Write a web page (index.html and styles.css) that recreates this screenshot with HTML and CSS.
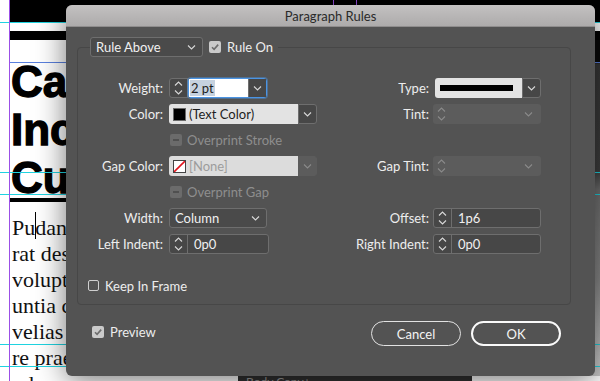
FILE: index.html
```html
<!DOCTYPE html>
<html lang="en">

<head>
    <meta charset="UTF-8">
    <meta name="viewport" content="width=device-width, initial-scale=1.0">
    <title>Paragraph Rules</title>
    <link rel="stylesheet" href="styles.css">
</head>

<body>
    <!-- Document page behind the dialog -->
    <div class="canvas">
        <div class="band band-top"></div>
        <div class="band band-bar"></div>
        <div class="photo"></div>
        <div class="headline">Capture<br>Incredible<br>Customers</div>
        <div class="head-rule"></div>
        <div class="copy">
            Pudandam quis<br>
            rat destiam et<br>
            voluptatem<br>
            untia cusam<br>
            velias ut qui<br>
            re praeriatur<br>
            od eum fugit
        </div>
        <div class="cursor"></div>

        <div class="guide guide-h" style="top: 22px;"></div>
        <div class="guide guide-h" style="top: 172px;"></div>
        <div class="guide guide-h" style="top: 194px;"></div>
        <div class="guide guide-h" style="top: 344px;"></div>
        <div class="guide guide-h" style="top: 366px;"></div>
        <div class="guide guide-frame"></div>
        <div class="guide guide-v" style="left: 9px;"></div>
        <div class="guide guide-v" style="left: 333px;"></div>
        <div class="guide guide-v" style="left: 356px;"></div>

        <div class="style-chip">Body Copy+</div>
    </div>

    <!-- Paragraph Rules dialog -->
    <div class="dialog">
        <div class="titlebar">Paragraph Rules</div>

        <div class="dialog-body">
            <fieldset class="group">
                <legend class="group-head">
                    <div class="select select-dark select-rule">
                        <span>Rule Above</span>
                        <svg class="chev" width="9" height="5" viewBox="0 0 9 5"><path d="M1 0.5 L4.5 4 L8 0.5" /></svg>
                    </div>
                    <span class="check check-on">
                        <svg width="12" height="12" viewBox="0 0 12 12"><path d="M3 6.2 L5.1 8.3 L9.2 3.6" /></svg>
                    </span>
                    <span class="check-label">Rule On</span>
                </legend>

                <div class="rules">
                    <!-- row 1 -->
                    <div class="label">Weight:</div>
                    <div class="ctl">
                        <div class="spinner spinner-split">
                            <div class="arrows">
                                <svg width="17" height="18" viewBox="0 0 17 18"><path d="M5 6.5 L8.5 3 L12 6.5 M5 11.5 L8.5 15 L12 11.5" /></svg>
                            </div>
                        </div>
                        <div class="combo focus">
                            <div class="combo-field"><span class="selected">2 pt</span></div>
                            <div class="combo-btn">
                                <svg class="chev" width="9" height="5" viewBox="0 0 9 5"><path d="M1 0.5 L4.5 4 L8 0.5" /></svg>
                            </div>
                        </div>
                    </div>
                    <div class="label label-right">Type:</div>
                    <div class="ctl">
                        <div class="combo combo-type">
                            <div class="combo-field light"><span class="line-swatch"></span></div>
                            <div class="combo-btn">
                                <svg class="chev" width="9" height="5" viewBox="0 0 9 5"><path d="M1 0.5 L4.5 4 L8 0.5" /></svg>
                            </div>
                        </div>
                    </div>

                    <!-- row 2 -->
                    <div class="label">Color:</div>
                    <div class="ctl">
                        <div class="combo combo-color">
                            <div class="combo-field light"><span class="swatch swatch-black"></span>(Text Color)</div>
                            <div class="combo-btn">
                                <svg class="chev" width="9" height="5" viewBox="0 0 9 5"><path d="M1 0.5 L4.5 4 L8 0.5" /></svg>
                            </div>
                        </div>
                    </div>
                    <div class="label label-right">Tint:</div>
                    <div class="ctl">
                        <div class="disabled-spin">
                            <svg class="arrows-off" width="17" height="18" viewBox="0 0 17 18"><path d="M5 6.5 L8.5 3 L12 6.5 M5 11.5 L8.5 15 L12 11.5" /></svg>
                            <svg class="chev chev-off" width="9" height="5" viewBox="0 0 9 5"><path d="M1 0.5 L4.5 4 L8 0.5" /></svg>
                        </div>
                    </div>

                    <!-- row 3 -->
                    <div class="label"></div>
                    <div class="ctl ctl-wide">
                        <span class="check check-off"><span class="dash"></span></span>
                        <span class="check-label muted">Overprint Stroke</span>
                    </div>

                    <!-- row 4 -->
                    <div class="label">Gap Color:</div>
                    <div class="ctl">
                        <div class="combo combo-color combo-off">
                            <div class="combo-field light-off">
                                <span class="swatch swatch-none">
                                    <svg width="11" height="11" viewBox="0 0 11 11"><path d="M0 11 L11 0" /></svg>
                                </span>[None]
                            </div>
                            <div class="combo-btn">
                                <svg class="chev chev-off" width="9" height="5" viewBox="0 0 9 5"><path d="M1 0.5 L4.5 4 L8 0.5" /></svg>
                            </div>
                        </div>
                    </div>
                    <div class="label label-right">Gap Tint:</div>
                    <div class="ctl">
                        <div class="disabled-spin">
                            <svg class="arrows-off" width="17" height="18" viewBox="0 0 17 18"><path d="M5 6.5 L8.5 3 L12 6.5 M5 11.5 L8.5 15 L12 11.5" /></svg>
                            <svg class="chev chev-off" width="9" height="5" viewBox="0 0 9 5"><path d="M1 0.5 L4.5 4 L8 0.5" /></svg>
                        </div>
                    </div>

                    <!-- row 5 -->
                    <div class="label"></div>
                    <div class="ctl ctl-wide">
                        <span class="check check-off"><span class="dash"></span></span>
                        <span class="check-label muted">Overprint Gap</span>
                    </div>

                    <!-- row 6 -->
                    <div class="label">Width:</div>
                    <div class="ctl">
                        <div class="select select-dark select-width">
                            <span>Column</span>
                            <svg class="chev" width="9" height="5" viewBox="0 0 9 5"><path d="M1 0.5 L4.5 4 L8 0.5" /></svg>
                        </div>
                    </div>
                    <div class="label label-right">Offset:</div>
                    <div class="ctl">
                        <div class="spinner spinner-right">
                            <div class="arrows">
                                <svg width="17" height="18" viewBox="0 0 17 18"><path d="M5 6.5 L8.5 3 L12 6.5 M5 11.5 L8.5 15 L12 11.5" /></svg>
                            </div>
                            <div class="spin-value">1p6</div>
                        </div>
                    </div>

                    <!-- row 7 -->
                    <div class="label">Left Indent:</div>
                    <div class="ctl">
                        <div class="spinner spinner-left">
                            <div class="arrows">
                                <svg width="17" height="18" viewBox="0 0 17 18"><path d="M5 6.5 L8.5 3 L12 6.5 M5 11.5 L8.5 15 L12 11.5" /></svg>
                            </div>
                            <div class="spin-value">0p0</div>
                        </div>
                    </div>
                    <div class="label label-right">Right Indent:</div>
                    <div class="ctl">
                        <div class="spinner spinner-right">
                            <div class="arrows">
                                <svg width="17" height="18" viewBox="0 0 17 18"><path d="M5 6.5 L8.5 3 L12 6.5 M5 11.5 L8.5 15 L12 11.5" /></svg>
                            </div>
                            <div class="spin-value">0p0</div>
                        </div>
                    </div>
                </div>

                <div class="keep-row">
                    <span class="check check-empty"></span>
                    <span class="check-label">Keep In Frame</span>
                </div>
            </fieldset>

            <div class="footer">
                <div class="preview">
                    <span class="check check-on">
                        <svg width="12" height="12" viewBox="0 0 12 12"><path d="M3 6.2 L5.1 8.3 L9.2 3.6" /></svg>
                    </span>
                    <span class="check-label">Preview</span>
                </div>
                <button class="btn btn-cancel">Cancel</button>
                <button class="btn btn-ok">OK</button>
            </div>
        </div>
    </div>
</body>

</html>
```

FILE: styles.css
```css
body {
    margin: 0;
    width: 600px;
    height: 381px;
    overflow: hidden;
    position: relative;
    background: #fff;
    font-family: Lato, "Open Sans", sans-serif;
}

/* ---------- document canvas ---------- */
.canvas {
    position: absolute;
    inset: 0;
    background: #fff;
    overflow: hidden;
}

.band {
    position: absolute;
    left: 10px;
    right: 0;
    background: #000;
}

.band-top {
    top: 0;
    height: 22px;
}

.band-bar {
    top: 31px;
    height: 9px;
}

.photo {
    position: absolute;
    left: 560px;
    top: 40px;
    width: 40px;
    height: 336px;
    background: linear-gradient(#0a0a0a 0, #0a0a0a 22px, #383838 24px, #3e3e3e 130px, #707070 150px, #8a8a8a 240px, #c8c8c8 320px);
}

/* text frames are clipped where the dialog starts */
.headline {
    position: absolute;
    left: 11px;
    top: 58px;
    width: 55px;
    overflow: hidden;
    font-family: "Liberation Sans", Arial, sans-serif;
    font-weight: bold;
    font-size: 44px;
    line-height: 48px;
    color: #000;
    -webkit-text-stroke: 1.3px #000;
    white-space: nowrap;
}

.head-rule {
    position: absolute;
    left: 10px;
    top: 198px;
    width: 400px;
    height: 4px;
    background: #000;
}

.copy {
    position: absolute;
    left: 12px;
    top: 215px;
    width: 54px;
    overflow: hidden;
    font-family: "Liberation Serif", "Times New Roman", serif;
    font-size: 22px;
    line-height: 26px;
    color: #111;
    white-space: nowrap;
}

.cursor {
    position: absolute;
    left: 35px;
    top: 212px;
    width: 1px;
    height: 27px;
    background: #000;
}

.guide {
    position: absolute;
}

.guide-h {
    left: 0;
    right: 0;
    height: 1px;
    background: #1fd3e0;
}

.guide-frame {
    left: 10px;
    right: 0;
    top: 62px;
    height: 1px;
    background: #5a80de;
}

.guide-v {
    top: 0;
    bottom: 0;
    width: 1px;
    background: #9b4fe6;
}

.style-chip {
    position: absolute;
    left: 238px;
    top: 376px;
    width: 226px;
    height: 10px;
    padding-left: 8px;
    background: #303030;
    color: #9a9a9a;
    font-size: 12px;
    line-height: 12px;
}

/* ---------- dialog ---------- */
.dialog {
    position: absolute;
    left: 66px;
    top: 5px;
    width: 529px;
    height: 371px;
    background: #535353;
    border-radius: 6px;
    box-shadow: 0 4px 30px rgba(0, 0, 0, 0.55);
    overflow: hidden;
    color: #ededed;
    font-size: 13px;
}

.titlebar {
    height: 21px;
    line-height: 22px;
    text-align: center;
    color: #2a2a2a;
    background: linear-gradient(#c3c1c1, #adabab);
    border-bottom: 1px solid #8f8d8d;
}

.dialog-body {
    padding: 10px 24px 0 11px;
}

.group {
    margin: 0;
    padding: 0 0 12px 0;
    min-width: 0;
    border: 1px solid #474747;
    border-radius: 4px;
}

.group-head {
    display: flex;
    align-items: center;
    margin-left: 12px;
    padding: 0 5px 0 0;
}

.group-head .check {
    margin-left: 6px;
}

.group-head .check-label {
    margin-left: 6px;
}

/* dropdowns */
.select {
    display: flex;
    align-items: center;
    justify-content: space-between;
    height: 18px;
    padding: 0 6px 0 5px;
    border-radius: 3px;
}

.select-dark {
    background: #4a4a4a;
    border: 1px solid #6e6e6e;
    color: #f0f0f0;
}

.select-rule {
    width: 100px;
}

.select-width {
    width: 85px;
}

.chev path,
.arrows path,
.arrows-off path {
    fill: none;
    stroke: #d8d8d8;
    stroke-width: 1.1;
}

.chev-off path,
.arrows-off path {
    stroke: #8a8a8a;
}

/* checkboxes */
.check {
    display: inline-flex;
    align-items: center;
    justify-content: center;
    width: 12px;
    height: 12px;
    border-radius: 2px;
    box-sizing: border-box;
    flex: none;
}

.check-on {
    background: #cacaca;
}

.check-on path {
    fill: none;
    stroke: #6c6c6c;
    stroke-width: 1.6;
}

.check-off {
    background: #6b6b6b;
}

.check-off .dash {
    width: 6px;
    height: 2px;
    background: #505050;
}

.check-empty {
    width: 11px;
    height: 11px;
    border: 1px solid #cfcfcf;
}

.check-label {
    white-space: nowrap;
}

.muted {
    color: #8e8e8e;
}

/* field grid */
.rules {
    display: grid;
    grid-template-columns: 91px 170px 94px 108px;
    grid-auto-rows: 20px;
    row-gap: 6px;
    padding-top: 21px;
}

.label {
    text-align: right;
    padding-right: 6px;
    line-height: 20px;
    white-space: nowrap;
}

.label-right {
    padding-right: 4px;
}

.ctl {
    display: flex;
    align-items: center;
}

.ctl-wide {
    grid-column: 2 / 5;
    padding-left: 1px;
    gap: 5px;
}

/* spinners */
.spinner {
    display: flex;
    height: 18px;
    background: #474747;
    border: 1px solid #6e6e6e;
    border-radius: 3px;
    box-sizing: content-box;
}

.arrows {
    width: 17px;
    height: 18px;
    border-right: 1px solid #6e6e6e;
}

.arrows svg {
    display: block;
}

.spinner-split {
    border-radius: 3px 0 0 3px;
}

.spinner-left {
    width: 98px;
}

.spinner-right {
    width: 106px;
}

.spin-value {
    padding-left: 6px;
    line-height: 18px;
    color: #f0f0f0;
}

.disabled-spin {
    display: flex;
    align-items: center;
    justify-content: space-between;
    width: 108px;
    height: 20px;
    padding-right: 8px;
    box-sizing: border-box;
    background: #5c5c5c;
    border-radius: 3px;
}

.disabled-spin svg {
    display: block;
}

/* combo boxes */
.combo {
    display: flex;
    height: 20px;
    box-sizing: border-box;
    border-radius: 3px;
}

.combo-field {
    flex: 1;
    display: flex;
    align-items: center;
    padding-left: 4px;
    color: #1e1e1e;
    white-space: nowrap;
}

.combo-btn {
    width: 17px;
    display: flex;
    align-items: center;
    justify-content: center;
    background: #474747;
    border: 1px solid #6e6e6e;
    border-radius: 0 3px 3px 0;
}

.combo.focus {
    width: 79px;
    border: 1px solid #4b94e3;
    box-shadow: 0 0 0 1px rgba(75, 148, 227, 0.45);
    margin-left: -1px;
    height: 20px;
}

.combo.focus .combo-field {
    background: #fff;
    padding-left: 1px;
}

.combo.focus .combo-btn {
    border-width: 0 0 0 1px;
    border-radius: 0;
}

.selected {
    background: #c6d2df;
    padding: 0 1px;
    line-height: 16px;
}

.light {
    background: #e3e3e3;
    border-radius: 3px 0 0 3px;
}

.light-off {
    background: #dcdcdc;
    color: #9c9c9c;
    border-radius: 3px 0 0 3px;
}

.combo-color {
    width: 148px;
}

.combo-type {
    width: 106px;
    margin-left: 2px;
}

.combo-off .combo-btn {
    background: #5c5c5c;
    border-color: #5c5c5c;
}

.line-swatch {
    width: 73px;
    height: 6px;
    margin-left: 1px;
    background: #000;
}

.swatch {
    width: 13px;
    height: 13px;
    box-sizing: border-box;
    margin-right: 3px;
    border: 1px solid #6a6a6a;
}

.swatch-black {
    background: #000;
}

.swatch-none {
    background: #fff;
    border-color: #444;
}

.swatch-none svg {
    display: block;
}

.swatch-none path {
    stroke: #e0141e;
    stroke-width: 1.6;
}

.keep-row {
    display: flex;
    align-items: center;
    gap: 6px;
    margin-top: 25px;
    padding-left: 10px;
    height: 13px;
}

/* footer */
.footer {
    display: flex;
    align-items: flex-start;
    margin-top: 16px;
    padding: 0 10px 0 15px;
}

.preview {
    display: flex;
    align-items: center;
    gap: 6px;
    margin-top: 3px;
}

.btn {
    width: 90px;
    height: 25px;
    box-sizing: border-box;
    background: transparent;
    color: #f5f5f5;
    font-family: Lato, "Open Sans", sans-serif;
    font-size: 13px;
    border-radius: 13px;
    padding: 0;
}

.btn-cancel {
    margin-left: auto;
    border: 1.5px solid #e2e2e2;
}

.btn-ok {
    margin-left: 10px;
    border: 2px solid #fafafa;
}
```
